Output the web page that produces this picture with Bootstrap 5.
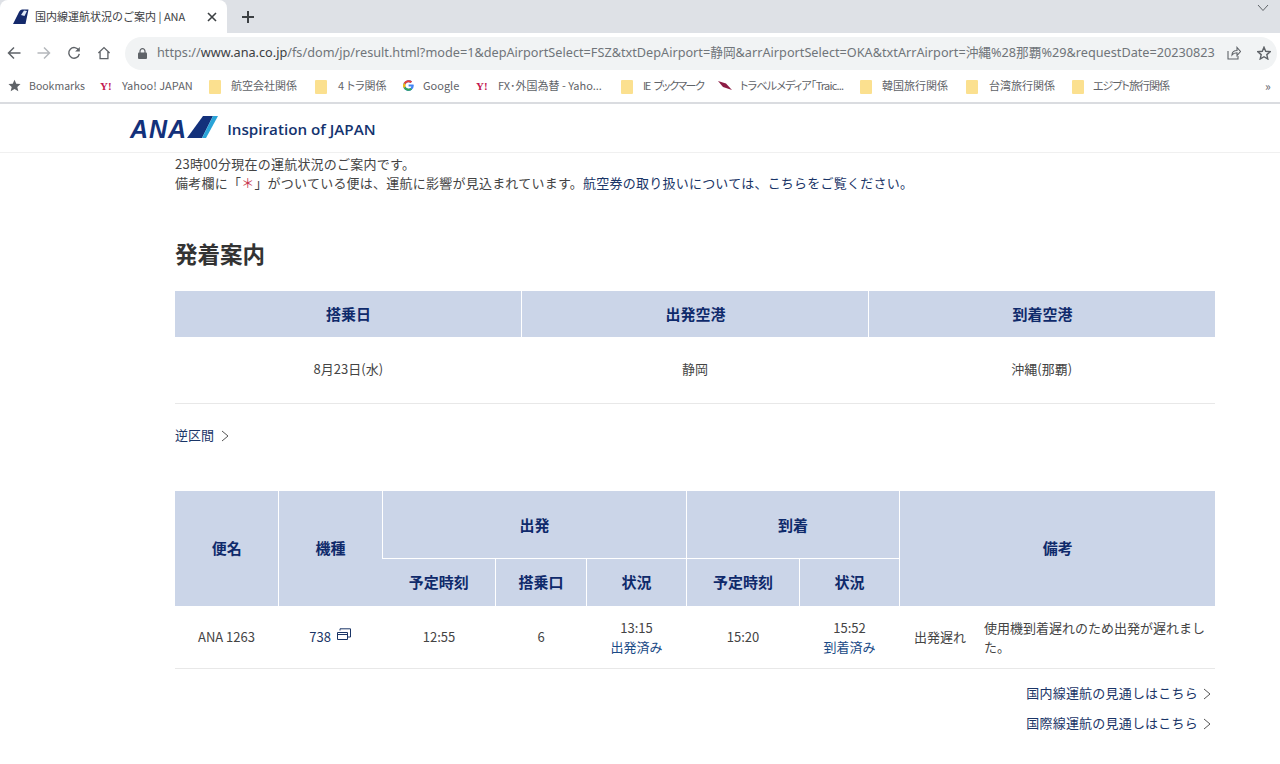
<!DOCTYPE html>
<html lang="ja">
<head>
<meta charset="utf-8">
<title>国内線運航状況のご案内 | ANA</title>
<link href="https://cdn.jsdelivr.net/npm/bootstrap@5.3.0/dist/css/bootstrap.min.css" rel="stylesheet">
<style>
html,body{height:764px;overflow:hidden}
body{font-family:"Noto Sans CJK JP","Noto Sans",sans-serif;font-size:13px;color:#444;background:#fff}
.tabstrip{height:33px;background:#dee1e6;position:relative}
.tabbox{width:227px;height:33px;background:#fff;border-radius:8px 8px 0 0;padding:0 10px 0 12px;color:#3c4043;font-size:11px}
.tabbox .ttl{flex:1;white-space:nowrap;margin-left:6px}
.winchev{position:absolute;right:11px;top:4px}
.toolbar{height:37px;background:#fff;padding:3px 3px 0 7px}
.tbicons{gap:16px;width:118px}
.omni{flex:1;height:33px;background:#f1f3f4;border-radius:17px;padding:0 6px 0 13px;color:#70757a;font-family:"Noto Sans","Noto Sans CJK JP",sans-serif;font-size:12.7px;white-space:nowrap;overflow:hidden}
.omni svg{flex-shrink:0}
.omni b{font-weight:400;color:#3c4043}
.omni .urltxt{margin-left:10px;flex:1}
.bmbar{height:34px;background:#fff;border-bottom:2px solid #dadce0;padding:0 8px;font-size:11px;color:#5f6368;white-space:nowrap;position:relative}
.bmi{position:absolute;top:7px;display:flex;align-items:center;gap:8px;height:17px}
.pk{font-feature-settings:"palt"}
.tight1{letter-spacing:-1.5px;word-spacing:3px}
.tight2{letter-spacing:-.8px}
.tight3{letter-spacing:-1px}
.bmn{font-size:10.5px}
.fold{width:12px;height:14px;background:#fbe08f;border-radius:1px;display:inline-block;margin-top:2px}
.sitehead{height:49px;border-bottom:1px solid #f0f0f0;padding-left:130px;gap:9px}
.tagline{font-family:"Open Sans","Noto Sans",sans-serif;font-weight:600;font-size:15.2px;color:#14336f;white-space:nowrap;margin-top:3px}
.logotxt{font-family:"Liberation Sans",sans-serif;font-style:italic;font-weight:700;font-size:25px;color:#13317b;letter-spacing:1px;line-height:1;margin-top:3px}
.mainwrap{margin:0 65px 0 175px;width:1040px;padding-top:1px}
.intro{line-height:19px;margin:0;letter-spacing:.23px}
.redstar{color:#c8374f}
.lnk{color:#1a3567;text-decoration:none}
h2.ttlh{font-size:22.5px;font-weight:700;color:#333;line-height:32px;margin:45px 0 22px}
.rtbl{width:100%;table-layout:fixed;border-collapse:collapse;margin:0}
.rtbl th{background:#cbd5e8;color:#0f2a6b;font-size:15px;font-weight:700;text-align:center;vertical-align:middle;border-left:1px solid #fff;padding:0 0 0 1px}
.rtbl th:first-child{border-left:0}
.rtbl td{text-align:center;vertical-align:middle;padding:0;border-bottom:1px solid #e8e8e8;line-height:20px}
.rtbl .bl th{border-top:1px solid #fff}
.t1 thead tr{height:46px}
.t1 tbody tr{height:66px}
.t1 tbody td{padding-bottom:2px}
.backl{margin:21px 0 46px;line-height:20px}
.t2 .r1{height:68px}
.t2 .r1 th[colspan]{padding-top:2px}
.t2 .r2{height:47px}
.t2 tbody tr{height:63px}
.t2 td{line-height:19px}
.t2 td:nth-child(n+3):nth-child(-n+7){padding-left:1px}
.rmk{display:flex;align-items:center;text-align:left;padding:0 6px 0 15px;gap:18px}
.rmk .rs{white-space:nowrap}
.subst{color:#1a4a86}
.morel{margin-top:14px;text-align:right;line-height:20px;padding-right:4px;letter-spacing:.2px}
.morel div+div{margin-top:10px}
.chev{margin-left:2px}
.icw{margin-left:3px}
</style>
</head>
<body>
<div class="tabstrip">
  <div class="tabbox d-flex align-items-center">
    <svg width="17" height="17" viewBox="0 0 17 17"><path d="M1 16 7 4Q8 1.500 10 1.500H16.500L13.500 16Z" fill="#14296b"/><path d="M9 7 12 2.500 15 3 12.500 8Z" fill="#dfe8f6"/></svg>
    <span class="ttl">国内線運航状況のご案内 | ANA</span>
    <svg width="10" height="10" viewBox="0 0 10 10"><path d="M1 1 9 9M9 1 1 9" stroke="#3c4043" stroke-width="1.600"/></svg>
  </div>
  <svg class="position-absolute" style="left:242px;top:11px" width="12" height="12" viewBox="0 0 12 12"><path d="M6 0V12M0 6H12" stroke="#3c4043" stroke-width="2"/></svg>
  <svg class="winchev" width="12" height="8" viewBox="0 0 12 8"><path d="M1 1 6 6.500 11 1" fill="none" stroke="#5f6368"/></svg>
</div>
<div class="toolbar d-flex align-items-center">
  <div class="tbicons d-flex align-items-center">
    <svg width="14" height="14" viewBox="0 0 14 14"><path d="M13.500 7H1.500M7 1.500 1.500 7 7 12.500" fill="none" stroke="#5f6368" stroke-width="1.500"/></svg>
    <svg width="14" height="14" viewBox="0 0 14 14"><path d="M.5 7H12.500M7 1.500 12.500 7 7 12.500" fill="none" stroke="#b5b8bc" stroke-width="1.500"/></svg>
    <svg width="14" height="14" viewBox="0 0 15 15"><path d="M12.600 4.600A5.700 5.700 0 1 0 13.200 8.500" fill="none" stroke="#5f6368" stroke-width="1.500"/><path d="M13.700 1V6H8.700Z" fill="#5f6368"/></svg>
    <svg width="14" height="14" viewBox="0 0 15 15"><path d="M1.500 7.500 7.500 1.700 13.500 7.500M3.300 6.300V13.500H11.700V6.300" fill="none" stroke="#5f6368" stroke-width="1.400"/></svg>
  </div>
  <div class="omni d-flex align-items-center">
    <svg width="9" height="11" viewBox="0 0 9 11"><path d="M2 5V3.200a2.500 2.500 0 0 1 5 0V5" fill="none" stroke="#5f6368" stroke-width="1.200"/><rect y="4.500" width="9" height="6.500" rx="1" fill="#5f6368"/></svg>
    <span class="urltxt">https://<b>www.ana.co.jp</b>/fs/dom/jp/result.html?mode=1&amp;depAirportSelect=FSZ&amp;txtDepAirport=静岡&amp;arrAirportSelect=OKA&amp;txtArrAirport=沖縄%28那覇%29&amp;requestDate=20230823</span>
    <svg class="me-3" width="14" height="14" viewBox="0 0 14 14"><path d="M1 5V13H11V10M5 9C5 6 7 4.500 10 4.500V1.500L13.500 5.500 10 9.500V6.700C8 6.700 6 7.500 5 9Z" fill="none" stroke="#5f6368" stroke-width="1.100"/></svg>
    <svg width="14" height="14" viewBox="0 0 14 14"><path d="M7 1.200 8.700 5.300 13.200 5.700 9.800 8.600 10.800 13 7 10.700 3.200 13 4.200 8.600.8 5.700 5.300 5.300Z" fill="none" stroke="#5f6368" stroke-width="1.400"/></svg>
  </div>
</div>
<div class="bmbar">
  <div class="bmi" style="left:8px"><svg width="13" height="13" viewBox="0 0 14 14"><path d="M7 .8 8.900 5.100 13.500 5.500 10 8.600 11.100 13.200 7 10.800 2.900 13.200 4 8.600.5 5.500 5.100 5.100Z" fill="#5f6368"/></svg><span class="bmn">Bookmarks</span></div>
  <div class="bmi" style="left:100px"><span style="color:#c3174f;font:700 11px 'Liberation Serif',serif;width:14px">Y!</span><span>Yahoo! JAPAN</span></div>
  <div class="bmi" style="left:209px"><i class="fold"></i><span style="margin-left:2px">航空会社関係</span></div>
  <div class="bmi" style="left:315px"><i class="fold"></i><span class="pk" style="margin-left:3px">4 トラ関係</span></div>
  <div class="bmi" style="left:402px"><svg width="13" height="13" viewBox="0 0 13 13"><path d="M11.500 5.400H6.600V7.500H9.400C9 9 7.900 9.700 6.500 9.700A3.200 3.200 0 1 1 8.600 4.100L10.100 2.600A5.400 5.400 0 1 0 11.800 6.500Z" fill="#4285f4"/><path d="M1.700 3.900 3.500 5.300A3.200 3.200 0 0 1 8.600 4.100L10.100 2.600A5.400 5.400 0 0 0 1.700 3.900Z" fill="#ea4335"/><path d="M1.700 9.100 3.500 7.700A3.200 3.200 0 0 0 8.500 9L10 10.400A5.400 5.400 0 0 1 1.700 9.100Z" fill="#34a853"/><path d="M1.700 3.900 3.500 5.300Q3.100 6.500 3.500 7.700L1.700 9.100Q.4 6.500 1.700 3.900Z" fill="#fbbc05"/></svg><span>Google</span></div>
  <div class="bmi" style="left:476px"><span style="color:#c3174f;font:700 11px 'Liberation Serif',serif;width:14px">Y!</span><span>FX･外国為替 - Yaho...</span></div>
  <div class="bmi" style="left:621px"><i class="fold"></i><span class="pk tight1" style="margin-left:2px">IE ブックマーク</span></div>
  <div class="bmi" style="left:718px"><svg width="14" height="10" viewBox="0 0 14 10"><path d="M0 0 8 2.500 14 9 5 6Z" fill="#8d1d45"/></svg><span class="pk tight2">トラベルメディア｢Traic...</span></div>
  <div class="bmi" style="left:860px"><i class="fold"></i><span style="margin-left:2px">韓国旅行関係</span></div>
  <div class="bmi" style="left:966px"><i class="fold"></i><span style="margin-left:3px">台湾旅行関係</span></div>
  <div class="bmi" style="left:1072px"><i class="fold"></i><span class="pk tight3" style="margin-left:1px">エジプト旅行関係</span></div>
  <div class="bmi" style="left:1265px;font-size:12px">»</div>
</div>
<div class="sitehead d-flex align-items-center">
  <div class="d-flex align-items-center">
    <span class="logotxt">ANA</span>
    <svg width="31" height="22" viewBox="0 0 31 22" style="margin-top:-2px"><path d="M0 22 16 0H26L15 22Z" fill="#13317b"/><path d="M26 0H31L19 22H15Z" fill="#2aa4d8"/></svg>
  </div>
  <span class="tagline">Inspiration of JAPAN</span>
</div>
<main class="mainwrap">
  <p class="intro">23時00分現在の運航状況のご案内です。<br>備考欄に「<span class="redstar">＊</span>」がついている便は、運航に影響が見込まれています。<a class="lnk" href="#">航空券の取り扱いについては、こちらをご覧ください。</a></p>
  <h2 class="ttlh">発着案内</h2>
  <table class="rtbl t1">
    <thead><tr><th>搭乗日</th><th>出発空港</th><th>到着空港</th></tr></thead>
    <tbody><tr><td>8月23日(水)</td><td>静岡</td><td>沖縄(那覇)</td></tr></tbody>
  </table>
  <div class="backl"><a class="lnk" href="#">逆区間 <svg width="8" height="12" viewBox="0 0 8 12" class="ms-1"><path d="M1 1 7 6 1 11" fill="none" stroke="#555"/></svg></a></div>
  <table class="rtbl t2">
    <colgroup><col style="width:103px"><col style="width:104px"><col style="width:113px"><col style="width:91px"><col style="width:100px"><col style="width:113px"><col style="width:100px"><col></colgroup>
    <thead>
      <tr class="r1"><th rowspan="2">便名</th><th rowspan="2">機種</th><th colspan="3">出発</th><th colspan="2">到着</th><th rowspan="2">備考</th></tr>
      <tr class="r2 bl"><th>予定時刻</th><th>搭乗口</th><th>状況</th><th>予定時刻</th><th>状況</th></tr>
    </thead>
    <tbody>
      <tr>
        <td>ANA 1263</td>
        <td><a class="lnk" href="#">738 <svg class="icw" width="14" height="12" viewBox="0 0 14 12" style="vertical-align:2px"><path d="M.5 4.500H10.500V11.500H.5ZM.5 6.500H10.500M3 2.500V.8H13.500V9H11" fill="none" stroke="#1a3567"/></svg></a></td>
        <td>12:55</td>
        <td>6</td>
        <td>13:15<br><span class="subst">出発済み</span></td>
        <td>15:20</td>
        <td>15:52<br><span class="subst">到着済み</span></td>
        <td><div class="rmk"><span class="rs">出発遅れ</span><span>使用機到着遅れのため出発が遅れました。</span></div></td>
      </tr>
    </tbody>
  </table>
  <div class="morel">
    <div><a class="lnk" href="#">国内線運航の見通しはこちら <svg class="chev" width="8" height="12" viewBox="0 0 8 12"><path d="M1 1 7 6 1 11" fill="none" stroke="#555"/></svg></a></div>
    <div><a class="lnk" href="#">国際線運航の見通しはこちら <svg class="chev" width="8" height="12" viewBox="0 0 8 12"><path d="M1 1 7 6 1 11" fill="none" stroke="#555"/></svg></a></div>
  </div>
</main>
<script src="https://cdn.jsdelivr.net/npm/bootstrap@5.3.0/dist/js/bootstrap.bundle.min.js"></script>
</body>
</html>
